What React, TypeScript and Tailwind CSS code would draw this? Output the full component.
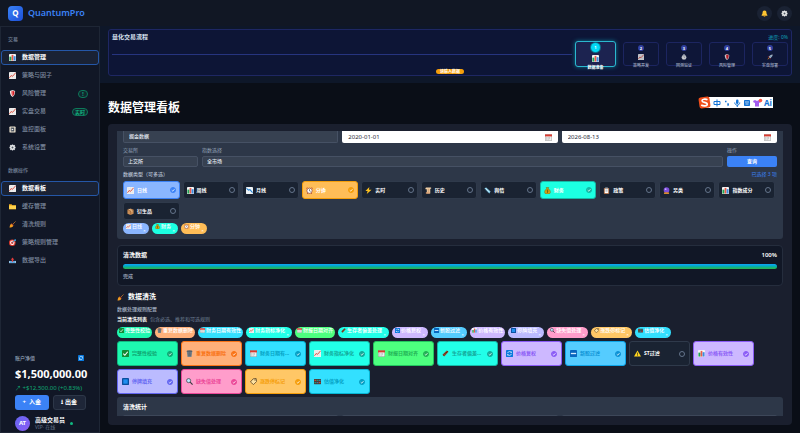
import { useState } from 'react';
import type { ReactNode } from 'react';
import clsx from 'clsx';

const icons: Record<string, ReactNode> = {
  bar: (
    <>
      <rect width="16" height="16" rx="1" fill="#f3f5f6" />
      <path d="M1 6h4.500v9H1z" fill="#1fa653" />
      <path d="M6 2h4v13H6z" fill="#ec5a4a" />
      <path d="M10.500 5H15v10h-4.500z" fill="#3b8be0" />
    </>
  ),
  up: (
    <>
      <rect width="16" height="16" rx="1" fill="#f5f3f0" />
      <path d="M4 0v16M8 0v16M12 0v16M0 4h16M0 8h16M0 12h16" stroke="#cfd6da" strokeWidth="0.6" />
      <path d="M1 13l4-5 3 2 7-8" fill="none" stroke="#e0402f" strokeWidth="2" />
    </>
  ),
  down: (
    <>
      <rect width="16" height="16" rx="1" fill="#eef3f7" />
      <path d="M1 3l5 4 3-1 6 7" fill="none" stroke="#1f7fd1" strokeWidth="2.4" />
    </>
  ),
  shield: (
    <>
      <path d="M8 0l6 2.500c0 7-2 11-6 13.500C4 13.500 2 9.500 2 2.500z" fill="#e8e8e8" />
      <path d="M8 1.500L4 3.300C4 9 5 12 8 14.300z" fill="#f4f4f4" />
      <path d="M8 1.500l4.500 1.800C12.500 9 11 12 8 14.300z" fill="#d81e26" />
      <path d="M8 1.500L5.500 2.600C5.500 8 6 12 8 14.300z" fill="#e8383a" />
    </>
  ),
  film: (
    <>
      <rect x="1" y="1" width="14" height="14" rx="2" fill="#f0e6d2" />
      <rect x="4" y="3.500" width="8" height="9" fill="#47505c" />
      <path d="M6 5.500l4.500 2.500L6 10.500z" fill="#fff" />
    </>
  ),
  gear: (
    <>
      <path d="M8 1v14M1 8h14M3 3l10 10M13 3L3 13" stroke="#d7dadd" strokeWidth="3" />
      <circle cx="8" cy="8" r="5.500" fill="#e9ebec" />
      <circle cx="8" cy="8" r="2.200" fill="#4a5460" />
    </>
  ),
  folder: (
    <>
      <path d="M0 3h6l1.500 2H16v9H0z" fill="#f0a91b" />
      <path d="M0 6h16v8H0z" fill="#ffd24d" />
    </>
  ),
  broom: (
    <>
      <path d="M15 1L8 8" stroke="#a8682a" strokeWidth="2" />
      <path d="M5 6l5 5c-2 4-5 4-9 4 1-2 0-6 4-9z" fill="#f29a1f" />
      <path d="M6 5.500l4.500 4.500" stroke="#d83b2b" strokeWidth="1.800" />
    </>
  ),
  target: (
    <>
      <circle cx="7.500" cy="8.500" r="7.500" fill="#e0392d" />
      <circle cx="7.500" cy="8.500" r="5" fill="#fff" />
      <circle cx="7.500" cy="8.500" r="2.800" fill="#e0392d" />
      <path d="M7.500 8.500L14 2" stroke="#1681c4" strokeWidth="1.800" />
      <path d="M11 2l4-2 1 4-3 1z" fill="#36a9e8" />
    </>
  ),
  outbox: (
    <>
      <path d="M0 9h16v5H0z" fill="#cfe4f2" />
      <path d="M1 10h14v3H1z" fill="#2b8ad6" />
      <path d="M8 1l4 5H9.500v5h-3V6H4z" fill="#e23c3c" />
    </>
  ),
  bell: (
    <>
      <path d="M8 1c4 0 4.500 3 4.500 6 0 2 1 3 2 4.500v1.500h-13v-1.500c1-1.500 2-2.500 2-4.500 0-3 .5-6 4.500-6z" fill="#ffc531" />
      <path d="M6 13.500h4a2 2 0 01-4 0z" fill="#d98b12" />
    </>
  ),
  clock: (
    <>
      <path d="M3 1L0 4M13 1l3 3M4 14l-1 2M12 14l1 2" stroke="#b5432f" strokeWidth="2" />
      <circle cx="8" cy="8.500" r="6" fill="#fff" stroke="#8d3b2c" strokeWidth="1.600" />
      <path d="M8 5v4l2.500 1" fill="none" stroke="#333" strokeWidth="1.300" />
    </>
  ),
  bolt: <path d="M10 0L1 9h5l-2 7 11-10H9z" fill="#ffc21f" />,
  scroll: (
    <>
      <path d="M3 1h11v3h-2v11H3c2-2 1-4 1-10H1C1 3 1 1 3 1z" fill="#f2d2a9" />
      <path d="M6 5h4M6 7.500h4M6 10h4" stroke="#a8653a" strokeWidth="1" />
      <path d="M2 12h9v3H2z" fill="#d99b6c" />
    </>
  ),
  news: (
    <>
      <path d="M1 3l4-2 10 9-3 5z" fill="#8fd3ee" />
      <path d="M4 4l7 7" stroke="#e4f5fc" strokeWidth="1.400" />
      <path d="M3 6l8 8" stroke="#4b8fb5" strokeWidth="1" />
    </>
  ),
  money: (
    <>
      <path d="M5 1h6l-1.500 3c4 2 5 5 5 8 0 3-2 4-6.500 4s-6.500-1-6.500-4c0-3 1-6 5-8z" fill="#d8a413" stroke="#5f5c12" strokeWidth="1" />
      <path d="M10 7.500C7 6 5.500 9 8 9.700s2 3.300-2 2M8 6v8" fill="none" stroke="#4b4a0d" strokeWidth="1" />
    </>
  ),
  clip: (
    <>
      <rect x="2" y="2" width="12" height="14" rx="1" fill="#a86a45" />
      <path d="M4 4h8v10H4z" fill="#fff" />
      <path d="M5 1h6v3H5z" fill="#9aa4ad" />
      <path d="M5.500 7h5M5.500 9.500h5" stroke="#68737d" />
    </>
  ),
  orb: (
    <>
      <circle cx="8" cy="7" r="6.500" fill="#7c4ddb" />
      <circle cx="6" cy="5" r="2" fill="#c9a8ff" />
      <path d="M3 12h10l1 4H2z" fill="#d98a2f" />
    </>
  ),
  box: (
    <>
      <path d="M1 4l7-3 7 3v9l-7 3-7-3z" fill="#c98d56" />
      <path d="M1 4l7 3v9M15 4L8 7" fill="none" stroke="#8c5a2e" />
      <path d="M4 2.700l7 3v3" fill="none" stroke="#f1d1a3" strokeWidth="1.500" />
    </>
  ),
  check: (
    <>
      <rect width="16" height="16" rx="1" fill="#138a36" />
      <path d="M3 8.500l3.500 3.500L13 4" fill="none" stroke="#fff" strokeWidth="2.400" />
    </>
  ),
  trash: (
    <>
      <path d="M2 4h12l-1.500 12h-9z" fill="#7b8791" />
      <path d="M5 6l.5 8M8 6v8M11 6l-.5 8" stroke="#3e4851" strokeWidth="1" />
      <ellipse cx="8" cy="3" rx="7" ry="2.500" fill="#56616b" />
    </>
  ),
  cal: (
    <>
      <rect x="0.500" y="1" width="15" height="14.500" rx="1" fill="#f4f4f4" stroke="#6d6d6d" />
      <path d="M0 1h16v4.500H0z" fill="#d93a2f" />
      <path d="M3 8h10M3 10.500h10M3 13h7" stroke="#8d8d8d" strokeWidth="1.200" strokeDasharray="2 1.300" />
    </>
  ),
  ladder: (
    <>
      <path d="M1 11L11 1l4 3L5 15z" fill="#8a3b20" />
      <path d="M3 12L13 3" stroke="#2c1a10" strokeWidth="1.500" />
      <path d="M4 9l3 3M7 6l3 3M10 3l3 3" stroke="#d98445" />
    </>
  ),
  blue: (
    <>
      <rect width="16" height="16" rx="1" fill="#0b4f9e" />
      <rect x="3" y="3" width="10" height="10" fill="#208ff0" />
    </>
  ),
  cycle: (
    <>
      <rect width="16" height="16" rx="1" fill="#0878dc" />
      <path d="M12.500 6A5 5 0 003.500 7M3.500 10a5 5 0 009-1" fill="none" stroke="#fff" strokeWidth="1.500" />
      <path d="M13 3v3.500H9.500zM3 13V9.500h3.500z" fill="#fff" />
    </>
  ),
  fresh: (
    <>
      <rect width="16" height="16" rx="1" fill="#0867bf" />
      <path d="M2 6.500h12v3H2z" fill="#d7ecff" />
    </>
  ),
  search: (
    <>
      <circle cx="6" cy="6" r="4.700" fill="#bfe6ff" stroke="#40474f" strokeWidth="1.800" />
      <path d="M9.500 9.500L15 15" stroke="#33383d" strokeWidth="2.600" />
    </>
  ),
  tag: (
    <>
      <path d="M7 2l7-1 1 7-7 7-7-6z" fill="#ffe3a1" stroke="#4a351b" strokeWidth="1.600" />
      <circle cx="11.500" cy="4.500" r="1.400" fill="#4a351b" />
    </>
  ),
  value: (
    <>
      <rect y="2" width="16" height="12" rx="1" fill="#4a3a36" />
      <path d="M1 4h4v3H1zM11 9h4v3h-4z" fill="#c9493b" />
      <path d="M6 4h4v3H6zM1 9h4v3H1z" fill="#2f8f6b" />
      <path d="M11 4h4v3h-4zM6 9h4v3H6z" fill="#3f78a8" />
    </>
  ),
  warn: (
    <>
      <path d="M8 1l8 14H0z" fill="#ffd51e" />
      <path d="M8 6v5M8 12v1.500" stroke="#222" strokeWidth="1.600" />
    </>
  ),
  rocket: (
    <>
      <path d="M15 1c-5 0-8 3-10 7l3 3c4-2 7-5 7-10z" fill="#dfe6ea" />
      <path d="M5 6L1 8l4 1zM10 11l-2 4-1-4z" fill="#d7372d" />
      <circle cx="10.500" cy="5.500" r="1.500" fill="#2280c9" />
      <path d="M4 10l-3 5 5-3z" fill="#ffa21f" />
    </>
  ),
  timer: (
    <>
      <path d="M6 0h4v3H6z" fill="#aeb6bd" />
      <circle cx="8" cy="9" r="6.500" fill="#dadfe2" />
      <circle cx="8" cy="9" r="4" fill="#fff" />
      <path d="M8 6v3l2 1" fill="none" stroke="#444" strokeWidth="1.200" />
    </>
  ),
};

function Icon({ name, className = 'size-[7px]' }: { name: string; className?: string }) {
  return (
    <svg viewBox="0 0 16 16" className={clsx('shrink-0', className)} aria-hidden="true">
      {icons[name]}
    </svg>
  );
}

interface NavItem {
  icon: string;
  label: string;
  badge?: string;
}

const tradeNav: NavItem[] = [
  { icon: 'bar', label: '数据管理' },
  { icon: 'up', label: '策略与因子' },
  { icon: 'shield', label: '风险管理', badge: '!' },
  { icon: 'up', label: '实盘交易', badge: '实时' },
  { icon: 'film', label: '监控面板' },
  { icon: 'gear', label: '系统设置' },
];

const dataNav: NavItem[] = [
  { icon: 'up', label: '数据看板' },
  { icon: 'folder', label: '缓存管理' },
  { icon: 'broom', label: '清洗规则' },
  { icon: 'target', label: '策略规则管理' },
  { icon: 'outbox', label: '数据导出' },
];

const steps = [
  { icon: 'bar', label: '数据准备' },
  { icon: 'up', label: '策略开发' },
  { icon: 'timer', label: '回测验证' },
  { icon: 'shield', label: '风险管理' },
  { icon: 'rocket', label: '实盘部署' },
];

interface Option {
  icon: string;
  label: string;
  short?: string;
  tone: string;
  required?: boolean;
}

const dataTypes: Option[] = [
  { icon: 'up', label: '日线', tone: 'bg-[#8ab6ff] border-[#3b82f6] text-[#3b82f6]' },
  { icon: 'bar', label: '周线', tone: 'bg-[#8ab6ff] border-[#3b82f6] text-[#3b82f6]' },
  { icon: 'down', label: '月线', tone: 'bg-[#8ab6ff] border-[#3b82f6] text-[#3b82f6]' },
  { icon: 'clock', label: '分钟', tone: 'bg-[#ffbd57] border-[#f59e0b] text-[#f59e0b]' },
  { icon: 'bolt', label: '实时', tone: 'bg-[#ffbd57] border-[#f59e0b] text-[#f59e0b]' },
  { icon: 'scroll', label: '历史', tone: 'bg-[#ffbd57] border-[#f59e0b] text-[#f59e0b]' },
  { icon: 'news', label: '舆情', tone: 'bg-[#55ccff] border-[#0ea5e9] text-[#0ea5e9]' },
  { icon: 'money', label: '财务', tone: 'bg-[#1cffe2] border-[#14b8a6] text-[#14b8a6]' },
  { icon: 'clip', label: '政策', tone: 'bg-[#1cffe2] border-[#14b8a6] text-[#14b8a6]' },
  { icon: 'orb', label: '另类', tone: 'bg-[#cdb8ff] border-[#8b5cf6] text-[#8b5cf6]' },
  { icon: 'bar', label: '指数成分', tone: 'bg-[#cdb8ff] border-[#8b5cf6] text-[#8b5cf6]' },
  { icon: 'box', label: '衍生品', tone: 'bg-[#ffb07a] border-[#f97316] text-[#f97316]' },
];

const rules: Option[] = [
  { icon: 'check', label: '完整性校验', tone: 'bg-[#1ef8b0] border-[#10b981] text-[#10a873]', required: true },
  { icon: 'trash', label: '重复数据删除', tone: 'bg-[#ffb07a] border-[#f97316] text-[#f97316]', required: true },
  { icon: 'cal', label: '财务日期有效性', short: '财务日期有...', tone: 'bg-[#33e0ff] border-[#06b6d4] text-[#06a0c4]', required: true },
  { icon: 'up', label: '财务指标净化', tone: 'bg-[#22ffe8] border-[#14b8a6] text-[#14a899]' },
  { icon: 'cal', label: '财报日期对齐', tone: 'bg-[#4dff7f] border-[#22c55e] text-[#22b055]', required: true },
  { icon: 'ladder', label: '生存者偏差处理', short: '生存者偏差...', tone: 'bg-[#22ffe8] border-[#14b8a6] text-[#14a899]' },
  { icon: 'cycle', label: '价格复权', tone: 'bg-[#cdb8ff] border-[#8b5cf6] text-[#8b5cf6]' },
  { icon: 'fresh', label: '新股过滤', tone: 'bg-[#55ccff] border-[#0ea5e9] text-[#0e93d6]' },
  { icon: 'warn', label: 'ST过滤', tone: 'bg-[#ffc766] border-[#f59e0b] text-[#f59e0b]' },
  { icon: 'bar', label: '价格有效性', tone: 'bg-[#cdb8ff] border-[#8b5cf6] text-[#8b5cf6]', required: true },
  { icon: 'blue', label: '停牌填充', tone: 'bg-[#bbbbff] border-[#6366f1] text-[#6366f1]' },
  { icon: 'search', label: '缺失值处理', tone: 'bg-[#ff9dcb] border-[#ec4899] text-[#ec4899]' },
  { icon: 'tag', label: '涨跌停标记', tone: 'bg-[#ffc766] border-[#f59e0b] text-[#f59e0b]' },
  { icon: 'value', label: '估值净化', tone: 'bg-[#33e0ff] border-[#06b6d4] text-[#06a0c4]' },
];

function NavGroup({ title, items, active }: { title: string; items: NavItem[]; active: string }) {
  return (
    <div>
      <h2 className="px-[7px] text-[5px] leading-[7px] font-medium text-[#718096]">{title}</h2>
      <nav className="mt-[7px] flex flex-col gap-[3px]">
        {items.map(item => (
          <a
            key={item.label}
            href="#"
            className={clsx(
              'flex h-[15px] items-center gap-[6px] rounded-[3px] border pr-[10px] pl-[7px] text-[6px]',
              item.label === active
                ? 'border-[#2557a7] bg-[#1a2234] font-bold text-white'
                : 'border-transparent font-medium text-[#7d8a9f]'
            )}
          >
            <Icon name={item.icon} />
            <span className="flex-1">{item.label}</span>
            {item.badge && (
              <span className="flex h-2 min-w-[10px] items-center justify-center rounded-full border border-[#0d7a5a] bg-[#10b981]/10 px-[2px] text-[5px] leading-[6px] font-bold text-[#10b981]">
                {item.badge}
              </span>
            )}
          </a>
        ))}
      </nav>
    </div>
  );
}

function OptionCard({ option, checked, size, onToggle }: {
  option: Option;
  checked: boolean;
  size: 'sm' | 'lg';
  onToggle: () => void;
}) {
  return (
    <label
      className={clsx(
        'flex cursor-pointer items-center gap-[3px] rounded-[3px] border text-[5px] leading-[7px] font-bold',
        size === 'sm' ? 'h-[18px] px-[3px]' : 'h-[25px] w-[61px] px-1',
        checked ? option.tone : 'border-[#2f3a4b] bg-[#1a2332] text-white'
      )}
    >
      <Icon name={option.icon} />
      <span className={clsx('flex-1 whitespace-nowrap', checked && size === 'sm' && 'text-white')}>
        {size === 'lg' && option.short ? option.short : option.label}
      </span>
      <span className="grid shrink-0 place-items-center">
        <input
          type="checkbox"
          checked={checked}
          onChange={onToggle}
          className="col-start-1 row-start-1 size-[6px] appearance-none rounded-full border border-[#64748b] checked:border-current checked:bg-current"
        />
        {checked && (
          <svg viewBox="0 0 12 12" className="pointer-events-none col-start-1 row-start-1 size-[6px]" aria-hidden="true">
            <path d="M3.500 6.500l2 1.800 3.500-4" fill="none" stroke="#fff" strokeWidth="1.500" />
          </svg>
        )}
      </span>
    </label>
  );
}

function Pill({ option, onRemove }: { option: Option; onRemove: () => void }) {
  return (
    <span
      className={clsx(
        'flex h-[11px] items-start gap-px rounded-full text-[5px] leading-[7px] font-medium',
        option.required ? 'px-[2px]' : 'px-[3px]',
        option.tone
      )}
    >
      <Icon name={option.icon} className="mt-px size-[5px]" />
      <span className="text-white">{option.label}</span>
      {!option.required && (
        <button
          type="button"
          aria-label={`移除${option.label}`}
          onClick={onRemove}
          className="w-[3px] self-end text-[4px] leading-[7px] text-white"
        >
          ×
        </button>
      )}
    </span>
  );
}

// floating input method bar
function ImeBar() {
  return (
    <div className="absolute top-[14px] right-[27px] flex h-[11px] items-center bg-white pl-[7px] text-[#1373d6]">
      <svg viewBox="0 0 26 26" className="absolute -top-px -left-[7px] size-[13px]" aria-hidden="true">
        <rect x="2" y="2" width="22" height="22" rx="4" fill="#f04e1a" transform="rotate(-8 13 13)" />
        <path
          d="M19 7.500C15 5.500 8 6 8 9.500c0 4 10.500 2.500 10.500 7 0 4-8 4-12 1.500"
          fill="none"
          stroke="#fff"
          strokeWidth="3.200"
        />
      </svg>
      <svg viewBox="0 0 122 20" className="h-[10px] w-[61px]" fill="none" stroke="currentColor" strokeWidth="2" aria-hidden="true">
        <path d="M4 7h12v6H4zM10 3v14" />
        <path d="M26 7h3M31 11c2 1 2 3 0 4" strokeWidth="3" />
        <rect x="48" y="3" width="5" height="9" rx="2.500" fill="currentColor" stroke="none" />
        <path d="M45.500 9c0 7 10 7 10 0M50.500 14v4" />
        <rect x="64" y="4" width="12" height="12" rx="1.500" fill="currentColor" stroke="none" />
        <path d="M66 8h8M67 12h6" stroke="#fff" strokeWidth="1.400" />
        <path d="M82 6l4-2 4 2 4-2 4 2-2 4-2-1v8h-8V9l-2 1z" fill="#a45cf0" stroke="none" />
        <circle cx="97" cy="5" r="3.500" fill="#ff5340" stroke="none" />
      </svg>
      <span className="absolute right-px text-[8px] leading-[11px] font-bold">Ai</span>
    </div>
  );
}

export default function App() {
  const [types, setTypes] = useState(['日线', '财务', '分钟']);
  const [activeRules, setActiveRules] = useState(rules.filter(r => r.label !== 'ST过滤').map(r => r.label));
  const [startDate, setStartDate] = useState('2020-01-01');
  const [endDate, setEndDate] = useState('2026-08-13');

  const toggle = (list: string[], label: string) =>
    list.includes(label) ? list.filter(l => l !== label) : [...list, label];

  const rulePills = rules.filter(r => activeRules.includes(r.label));

  return (
    <div className="flex h-screen flex-col overflow-hidden bg-[#0a0e17] font-['Noto_Sans','Noto_Sans_CJK_SC',sans-serif] text-white">
      <header className="flex h-[26px] shrink-0 items-center justify-between bg-[#111724] px-2">
        <div className="flex items-center gap-[5px]">
          <div className="flex size-[15px] items-center justify-center rounded-[4px] bg-linear-to-br from-[#3b82f6] to-[#1d4ed8] text-[8px] font-bold">
            Q
          </div>
          <span className="text-[9px] leading-[12px] font-semibold text-[#3b82f6]">QuantumPro</span>
        </div>
        <div className="flex gap-[5px]">
          <button type="button" aria-label="通知" className="flex size-[15px] items-center justify-center rounded-full bg-[#1a2233]">
            <Icon name="bell" />
          </button>
          <button type="button" aria-label="设置" className="flex size-[15px] items-center justify-center rounded-full bg-[#1a2233]">
            <Icon name="gear" />
          </button>
        </div>
      </header>

      <div className="flex min-h-0 flex-1">
        <aside className="flex w-[100px] shrink-0 flex-col justify-between border border-[#1e2635] bg-[#111726] pt-[9px]">
          <div className="flex flex-col gap-3">
            <NavGroup title="交易" items={tradeNav} active="数据管理" />
            <NavGroup title="数据操作" items={dataNav} active="数据看板" />
          </div>

          <div className="pr-[13px] pl-[14px]">
            <div className="flex items-center justify-between pr-[2px] text-[5px] leading-[8px] font-medium text-[#94a3b8]">
              账户净值
              <Icon name="cycle" className="size-[6px]" />
            </div>
            <div className="mt-1 text-[11px] leading-[15px] font-bold">$1,500,000.00</div>
            <div className="mt-[3px] text-[6px] leading-[8px] whitespace-nowrap text-[#10a873]">↗ +$12,500.00 (+0.83%)</div>
            <div className="mt-[3px] grid grid-cols-2 gap-1 text-[6px] font-bold">
              <button type="button" className="h-[15px] rounded-[3px] bg-[#3b82f6]">+&nbsp; 入金</button>
              <button type="button" className="h-[15px] rounded-[3px] border border-[#2d3748] bg-[#1e2638]">⭳ 出金</button>
            </div>
            <div className="mt-[6px] flex items-center gap-[5px] pb-px">
              <div className="flex size-[15px] items-center justify-center rounded-full bg-linear-to-br from-[#6366f1] to-[#8b5cf6] text-[6px] font-bold">
                AT
              </div>
              <div>
                <div className="text-[6px] leading-[8px] font-bold">高级交易员</div>
                <div className="text-[5px] leading-[7px] text-[#64748b]">VIP· 在线</div>
              </div>
              <span className="size-[3px] rounded-full bg-[#10b981]" />
            </div>
          </div>
        </aside>

        <div className="flex min-w-0 flex-1 flex-col">
          <section className="shrink-0 bg-[#0e1729] px-2 pt-[3px] pb-[7px]">
            <div className="flex h-[47px] flex-col rounded-[3px] border border-[#1e2763] bg-[#0d1536] px-[3px] pt-[3px]">
              <div className="flex items-center justify-between text-[6px] leading-[8px]">
                <h2 className="font-bold text-[#dbe3f0]">量化交易流程</h2>
                <span className="text-[5px] font-medium text-[#0e8aa3]">进度: 0%</span>
              </div>
              <div className="flex items-start">
                <div className="flex flex-1 flex-col">
                  <div className="mt-[13px] mr-[3px] h-px bg-[#26347f]" />
                  <button type="button" className="mt-[14px] mr-[111px] h-[5px] w-7 self-end rounded-full bg-[#f59e0b] text-[4px] leading-[5px] font-bold">
                    请输入数据
                  </button>
                </div>
                <ol className="flex items-center gap-[7px] text-[4px] leading-[5px]">
                  {steps.map((step, i) => (
                    <li
                      key={step.label}
                      className={clsx(
                        'flex flex-col items-center rounded-[3px] border',
                        i === 0
                          ? 'h-[26px] w-[41px] border-[#2bb8cf] bg-[#1c2350] pt-px font-bold shadow-[0_0_4px_#0e7490]'
                          : 'h-6 w-9 border-[#1c2560] bg-[#0e1638] pt-[2px] font-medium text-[#a3adc2]'
                      )}
                    >
                      <span
                        className={clsx(
                          'flex shrink-0 items-center justify-center rounded-full font-bold text-white',
                          i === 0 ? 'size-[9px] bg-[#00d9f5] ring-1 ring-[#0e6f8a]' : 'size-[6px] bg-[#303f9f]'
                        )}
                      >
                        {i + 1}
                      </span>
                      <Icon name={step.icon} className={i === 0 ? 'mt-[3px] size-[7px]' : 'mt-[3px] size-[6px] opacity-80'} />
                      <span className="mt-[3px] whitespace-nowrap">{step.label}</span>
                    </li>
                  ))}
                </ol>
              </div>
            </div>
          </section>

          <main className="relative flex min-h-0 flex-1 flex-col px-2 pt-[17px] pb-2">
            <h1 className="text-[12px] leading-[16px] font-bold">数据管理看板</h1>
            <ImeBar />

            <div className="mt-2 flex min-h-0 flex-1 flex-col rounded-[4px] bg-[#1a1f2e] px-[9px] pt-[7px] pb-[9px]">
              <div className="min-h-0 flex-1 overflow-hidden">
                <section className="rounded-b-[3px] bg-[#2d3748] px-[6px] pb-[5px] text-[5px] leading-[7px]">
                  <div className="grid grid-cols-3 gap-1">
                    <select aria-label="数据源" className="h-3 appearance-none rounded-b-[2px] border border-t-0 border-[#465164] bg-[#374151] px-[5px] font-medium text-[#e2e8f0]">
                      <option>掘金数据</option>
                    </select>
                    <div className="flex h-3 items-center rounded-b-[2px] bg-white px-[6px]">
                      <input
                        aria-label="开始日期"
                        value={startDate}
                        onChange={e => setStartDate(e.target.value)}
                        className="min-w-0 flex-1 text-[6px] leading-[8px] text-[#1f2937] outline-none"
                      />
                      <Icon name="cal" />
                    </div>
                    <div className="flex h-3 items-center rounded-b-[2px] bg-white px-[6px]">
                      <input
                        aria-label="结束日期"
                        value={endDate}
                        onChange={e => setEndDate(e.target.value)}
                        className="min-w-0 flex-1 text-[6px] leading-[8px] text-[#1f2937] outline-none"
                      />
                      <Icon name="cal" />
                    </div>
                  </div>

                  <div className="mt-1 flex items-end gap-1">
                    <label className="flex w-[75px] flex-col gap-[2px] text-[#94a3b8]">
                      交易所
                      <select className="h-[11px] appearance-none rounded-[2px] border border-[#465164] bg-[#374151] px-1 font-medium text-[#e2e8f0]">
                        <option>上交所</option>
                      </select>
                    </label>
                    <label className="flex flex-1 flex-col gap-[2px] text-[#94a3b8]">
                      指数选择
                      <select className="h-[11px] appearance-none rounded-[2px] border border-[#465164] bg-[#374151] px-1 font-medium text-[#e2e8f0]">
                        <option>全市场</option>
                      </select>
                    </label>
                    <div className="flex w-[50px] flex-col gap-[2px] text-[#94a3b8]">
                      操作
                      <button type="button" className="h-[11px] rounded-[2px] bg-[#3b82f6] font-bold text-white">查询</button>
                    </div>
                  </div>

                  <div className="mt-1 flex justify-between">
                    <span className="font-medium text-[#b4bfce]">数据类型（可多选）</span>
                    <span className="text-[#3b82f6]">已选择 {types.length} 项</span>
                  </div>
                  <div className="mt-[3px] grid grid-cols-11 gap-[3px] pr-[2px]">
                    {dataTypes.map(t => (
                      <OptionCard
                        key={t.label}
                        option={t}
                        size="sm"
                        checked={types.includes(t.label)}
                        onToggle={() => setTypes(toggle(types, t.label))}
                      />
                    ))}
                  </div>
                  <div className="mt-[3px] flex flex-wrap gap-[3px]">
                    {types.map(label => (
                      <Pill
                        key={label}
                        option={dataTypes.find(t => t.label === label)!}
                        onRemove={() => setTypes(toggle(types, label))}
                      />
                    ))}
                  </div>
                </section>

                <section className="mt-[6px] rounded-[4px] border border-[#252d3d] bg-[#111726] px-[5px] pt-[5px] pb-[5px]">
                  <div className="flex justify-between text-[6px] leading-[8px] font-bold">
                    <h3>清洗数据</h3>
                    <span className="font-semibold">100%</span>
                  </div>
                  <div className="mt-[5px] h-[5px] overflow-hidden rounded-full bg-[#1e293b]">
                    <div className="h-full w-full bg-linear-to-b from-[#0ea5e9] from-20% to-[#22b35e] to-80%" />
                  </div>
                  <p className="mt-[4px] text-[5px] leading-[7px] font-medium text-[#a3b0c2]">完成</p>
                </section>

                <section className="mt-[6px]">
                  <h3 className="flex items-center gap-1 text-[7px] leading-[10px] font-bold">
                    <Icon name="broom" />
                    数据清洗
                  </h3>
                  <p className="mt-1 text-[5px] leading-[7px] font-medium text-[#a3b0c2]">数据处理规则配置</p>
                  <p className="mt-[3px] flex gap-[3px] text-[5px] leading-[7px] text-[#718096]">
                    <strong className="text-white">当前清洗列表</strong>
                    包含必选、推荐和可选规则
                  </p>
                  <div className="mt-1 flex flex-wrap gap-[3px]">
                    {rulePills.map(r => (
                      <Pill key={r.label} option={r} onRemove={() => setActiveRules(toggle(activeRules, r.label))} />
                    ))}
                  </div>
                  <div className="mt-[3px] flex flex-wrap gap-[3px]">
                    {rules.map(r => (
                      <OptionCard
                        key={r.label}
                        option={r}
                        size="lg"
                        checked={activeRules.includes(r.label)}
                        onToggle={() => !r.required && setActiveRules(toggle(activeRules, r.label))}
                      />
                    ))}
                  </div>
                </section>

                <section className="mt-[3px] rounded-t-[3px] bg-[#2d3748] px-[6px] pt-[6px]">
                  <h3 className="text-[6px] leading-[8px] font-bold">清洗统计</h3>
                  <div className="mt-1 grid grid-cols-3 gap-1">
                    <div className="h-5 rounded-[2px] bg-[#3d4759]" />
                    <div className="h-5 rounded-[2px] bg-[#3d4759]" />
                    <div className="h-5 rounded-[2px] bg-[#3d4759]" />
                  </div>
                </section>
              </div>
            </div>
          </main>
        </div>
      </div>
    </div>
  );
}
